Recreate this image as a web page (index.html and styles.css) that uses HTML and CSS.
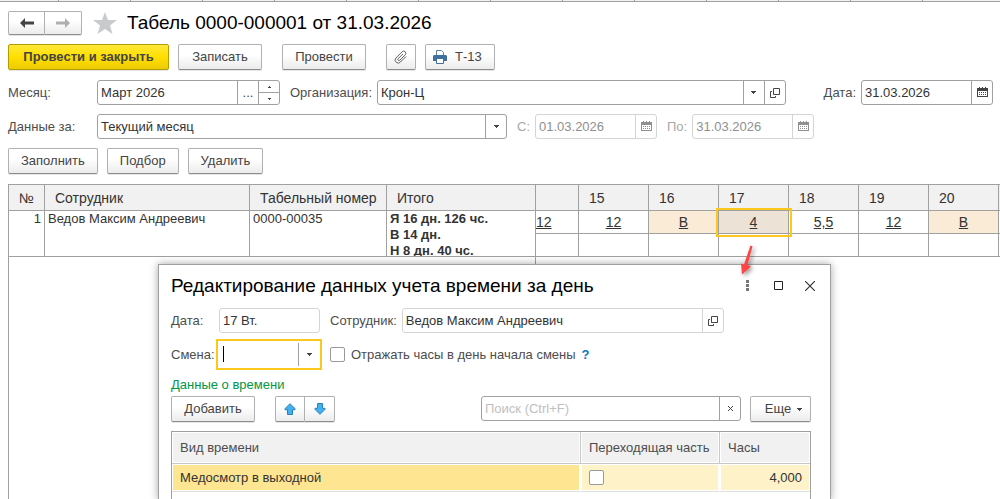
FILE: index.html
```
<!DOCTYPE html>
<html lang="ru">
<head>
    <meta charset="UTF-8">
    <meta name="viewport" content="width=device-width, initial-scale=1.0">
    <title>Табель 0000-000001 от 31.03.2026</title>
    <link rel="stylesheet" href="styles.css">
</head>
<body>
    <svg class="sprite" aria-hidden="true">
        <symbol id="icon-calendar" viewBox="0 0 11 11">
            <path d="M0 1h2V0h1v1h2V0h1v1h2V0h1v1h2v9H0z" fill="currentColor"/>
            <path d="M1 4h9v5H1z" fill="#fff"/>
            <path d="M2 5h1v1H2zM4 5h1v1H4zM6 5h1v1H6zM8 5h1v1H8zM2 7h1v1H2zM4 7h1v1H4zM6 7h1v1H6zM8 7h1v1H8z" fill="currentColor"/>
        </symbol>
        <symbol id="icon-open" viewBox="0 0 10 10">
            <path d="M3.500.5h6v6h-6zM2 3.500H.5v6h5V8" fill="none" stroke="currentColor"/>
        </symbol>
        <symbol id="icon-down" viewBox="0 0 5 3">
            <path d="M0 0h5v1H4v1H3v1H2V2H1V1H0z" fill="currentColor"/>
        </symbol>
    </svg>

    <div class="tab-strip"></div>

    <main class="document">
        <header class="title-bar">
            <div class="btn-group nav">
                <button class="btn" aria-label="Назад">
                    <svg width="14" height="10" viewBox="0 0 14 10"><path d="M5 0v3.500h9v3H5V10L0 5z" fill="#444"/></svg>
                </button>
                <button class="btn" aria-label="Вперед">
                    <svg width="14" height="10" viewBox="0 0 14 10"><path d="M9 0v3.500H0v3h9V10l5-5z" fill="#b0b0b0"/></svg>
                </button>
            </div>
            <svg class="star" width="24" height="22" viewBox="0 0 24 22"><path d="M12 0l3 8h9l-7 5.500 2.500 8.500-7.500-5-7.500 5L7 13.500 0 8h9z" fill="#c8cacc"/></svg>
            <h1>Табель 0000-000001 от 31.03.2026</h1>
        </header>

        <div class="toolbar">
            <button class="btn btn-primary">Провести и закрыть</button>
            <button class="btn btn-medium">Записать</button>
            <button class="btn btn-medium spaced">Провести</button>
            <button class="btn btn-clip spaced" aria-label="Файлы">
                <svg width="14" height="14" viewBox="0 0 14 14"><path d="M12 6.500L6.500 12a3 3 0 0 1-4.600-4L8 1.900a2.100 2.100 0 0 1 3.300 2.900L5.800 10.200a1.100 1.100 0 0 1-1.700-1.500L9 4" fill="none" stroke="#666"/></svg>
            </button>
            <button class="btn btn-print">
                <svg width="14" height="14" viewBox="0 0 14 14"><path d="M3.500 5V.5h5l2 2V5" fill="#fff" stroke="#5c7f9f"/><path d="M1 5h12l1 1v5H0V6z" fill="#3f6f9c"/><path d="M3.500 8.500h7v5h-7z" fill="#fff" stroke="#3f6f9c"/></svg>
                Т-13
            </button>
        </div>

        <div class="form-row">
            <label class="first-label" for="month">Месяц:</label>
            <div class="field month">
                <input id="month" type="text" value="Март 2026">
                <button aria-label="Выбрать">...</button>
                <div class="spinner">
                    <button aria-label="Больше"><svg width="3" height="2" viewBox="0 0 3 2"><path d="M1 0h1v1h1v1H0V1h1z" fill="#444"/></svg></button>
                    <button aria-label="Меньше"><svg width="3" height="2" viewBox="0 0 3 2"><path d="M0 0h3v1H2v1H1V1H0z" fill="#444"/></svg></button>
                </div>
            </div>
            <label class="next-label" for="org">Организация:</label>
            <div class="field org">
                <input id="org" type="text" value="Крон-Ц">
                <button aria-label="Список"><svg width="5" height="3"><use href="#icon-down"/></svg></button>
                <button aria-label="Открыть"><svg width="10" height="10"><use href="#icon-open"/></svg></button>
            </div>
            <label class="date-label" for="date">Дата:</label>
            <div class="field date">
                <input id="date" type="text" value="31.03.2026">
                <button aria-label="Календарь"><svg width="11" height="11"><use href="#icon-calendar"/></svg></button>
            </div>
        </div>

        <div class="form-row">
            <label class="first-label" for="period">Данные за:</label>
            <div class="field period">
                <input id="period" type="text" value="Текущий месяц">
                <button aria-label="Список"><svg width="5" height="3"><use href="#icon-down"/></svg></button>
            </div>
            <label class="next-label muted" for="from">С:</label>
            <div class="field short-date disabled">
                <input id="from" type="text" value="01.03.2026" disabled>
                <button aria-label="Календарь" disabled><svg width="11" height="11"><use href="#icon-calendar"/></svg></button>
            </div>
            <label class="next-label muted" for="to">По:</label>
            <div class="field short-date disabled">
                <input id="to" type="text" value="31.03.2026" disabled>
                <button aria-label="Календарь" disabled><svg width="11" height="11"><use href="#icon-calendar"/></svg></button>
            </div>
        </div>

        <div class="toolbar commands">
            <button class="btn">Заполнить</button>
            <button class="btn">Подбор</button>
            <button class="btn">Удалить</button>
        </div>

        <div class="sheet">
            <table class="timesheet">
                <colgroup>
                    <col class="c-num"><col class="c-name"><col class="c-code"><col class="c-total"><col class="c-cut">
                    <col class="c-day"><col class="c-day"><col class="c-day"><col class="c-day"><col class="c-day"><col class="c-day"><col>
                </colgroup>
                <thead>
                    <tr>
                        <th>№</th>
                        <th>Сотрудник</th>
                        <th>Табельный номер</th>
                        <th>Итого</th>
                        <th></th>
                        <th>15</th>
                        <th>16</th>
                        <th>17</th>
                        <th>18</th>
                        <th>19</th>
                        <th>20</th>
                        <th></th>
                    </tr>
                </thead>
                <tbody>
                    <tr>
                        <td class="num" rowspan="2">1</td>
                        <td rowspan="2">Ведов Максим Андреевич</td>
                        <td rowspan="2">0000-00035</td>
                        <td class="total" rowspan="2"><div>Я 16 дн. 126 чс.<br>В 14 дн.<br>Н 8 дн. 40 чс.</div></td>
                        <td class="day cut">12</td>
                        <td class="day">12</td>
                        <td class="day off">В</td>
                        <td class="day off selected">4</td>
                        <td class="day">5,5</td>
                        <td class="day">12</td>
                        <td class="day off">В</td>
                        <td class="day"></td>
                    </tr>
                    <tr class="second">
                        <td></td><td></td><td></td><td></td><td></td><td></td><td></td><td></td>
                    </tr>
                    <tr class="filler">
                        <td colspan="4"></td>
                        <td colspan="8"></td>
                    </tr>
                </tbody>
            </table>

            <section class="dialog" role="dialog" aria-labelledby="dialogTitle">
                <div class="dialog-head">
                    <h2 id="dialogTitle">Редактирование данных учета времени за день</h2>
                    <button aria-label="Еще"><svg width="3" height="11" viewBox="0 0 3 11"><path d="M0 0h3v3H0zM0 4h3v3H0zM0 8h3v3H0z" fill="#777"/></svg></button>
                    <button aria-label="Развернуть"><svg width="9" height="9" viewBox="0 0 9 9"><path d="M.5.5h8v8h-8z" fill="none" stroke="#222"/></svg></button>
                    <button aria-label="Закрыть"><svg width="10" height="10" viewBox="0 0 10 10"><path d="M0 0l10 10M10 0L0 10" stroke="#333" stroke-width="1.200"/></svg></button>
                </div>

                <div class="form-row">
                    <label class="dialog-label" for="day">Дата:</label>
                    <div class="field day-field light"><input id="day" type="text" value="17 Вт." readonly></div>
                    <label class="next-label" for="employee">Сотрудник:</label>
                    <div class="field employee light">
                        <input id="employee" type="text" value="Ведов Максим Андреевич" readonly>
                        <button aria-label="Открыть"><svg width="10" height="10"><use href="#icon-open"/></svg></button>
                    </div>
                </div>

                <div class="form-row shift-row">
                    <label class="shift-label" for="shift">Смена:</label>
                    <div class="field focused">
                        <span class="caret"></span>
                        <input id="shift" type="text">
                        <button aria-label="Список"><svg width="5" height="3"><use href="#icon-down"/></svg></button>
                    </div>
                    <input class="check" id="reflect" type="checkbox">
                    <label for="reflect">Отражать часы в день начала смены</label>
                    <a class="help" href="#">?</a>
                </div>

                <h3>Данные о времени</h3>

                <div class="toolbar time-tools">
                    <button class="btn btn-medium">Добавить</button>
                    <div class="btn-group spaced">
                        <button class="btn" aria-label="Вверх"><svg width="12" height="12" viewBox="0 0 12 12"><path d="M6 .7l5 5v1H8.500v4.800h-5V6.700H1v-1z" fill="#45b0f0" stroke="#2a7fb5"/></svg></button>
                        <button class="btn" aria-label="Вниз"><svg width="12" height="12" viewBox="0 0 12 12"><path d="M6 11.300l5-5v-1H8.500V.5h-5v4.800H1v1z" fill="#45b0f0" stroke="#2a7fb5"/></svg></button>
                    </div>
                    <div class="field search">
                        <input type="text" placeholder="Поиск (Ctrl+F)" aria-label="Поиск">
                        <button aria-label="Очистить"><svg width="5" height="5" viewBox="0 0 5 5"><path d="M0 0l5 5M5 0L0 5" stroke="#444"/></svg></button>
                    </div>
                    <button class="btn btn-more">Еще <svg width="5" height="3"><use href="#icon-down"/></svg></button>
                </div>

                <table class="time-table">
                    <colgroup><col><col class="c-pass"><col class="c-hours"></colgroup>
                    <thead>
                        <tr>
                            <th>Вид времени</th>
                            <th>Переходящая часть</th>
                            <th>Часы</th>
                        </tr>
                    </thead>
                    <tbody>
                        <tr>
                            <td class="current">Медосмотр в выходной</td>
                            <td><input class="check" type="checkbox" aria-label="Переходящая часть"></td>
                            <td class="hours">4,000</td>
                        </tr>
                        <tr class="empty"><td colspan="3"></td></tr>
                    </tbody>
                </table>

                <svg class="pointer" width="18" height="34" viewBox="0 0 18 34" aria-hidden="true"><path d="M11.500 1.500l2 .7L8.500 21l3.500 1.500L3 30.500 2 19.500l3 1z" fill="#f44"/></svg>
            </section>
        </div>
    </main>
</body>
</html>
```

FILE: styles.css
```
:root {
    --line: #a0a0a0;
    --line-light: #d4d4d4;
    --head: #f1f1f1;
    --text: #333;
    --label: #4d4d4d;
    --accent: #fbc91d;
}

* {
    margin: 0;
    padding: 0;
    box-sizing: border-box;
}

body {
    font-family: "Liberation Sans", Arial, sans-serif;
    font-size: 13px;
    line-height: 16px;
    color: var(--text);
    background: #fff;
    height: 100vh;
    overflow: hidden;
    display: flex;
    flex-direction: column;
}

button, input {
    font: inherit;
    color: inherit;
}

svg {
    display: block;
    flex-shrink: 0;
}

.sprite {
    position: absolute;
    width: 0;
    height: 0;
}

.tab-strip {
    height: 2px;
    flex-shrink: 0;
    border-bottom: 1px solid var(--line);
    background: repeating-linear-gradient(to right, #f2f2f2 0 71px, var(--line) 71px 72px) -13px 0;
}

.document {
    flex: 1;
    display: flex;
    flex-direction: column;
    padding: 8px 0 0 8px;
    min-height: 0;
}

/* Buttons */
.btn {
    display: flex;
    align-items: center;
    justify-content: center;
    height: 26px;
    padding: 0 12px;
    color: #444;
    white-space: nowrap;
    border: 1px solid #b0b0b0;
    border-bottom-color: #8c8c8c;
    border-radius: 2px;
    background: linear-gradient(#fff 40%, #ececec);
    box-shadow: 0 1px 0 rgba(0,0,0,0.1);
}

.btn-medium {
    width: 84px;
}

.btn-primary {
    width: 161px;
    font-weight: bold;
    border-color: #b59c00;
    background: linear-gradient(#ffe83a, #ffdf00 50%, #edcb00);
}

.btn-group {
    display: flex;
}

.btn-group .btn {
    width: 30px;
    padding: 0;
}

.btn-group .btn:first-child {
    border-radius: 2px 0 0 2px;
}

.btn-group .btn:last-child {
    border-left: 0;
    border-radius: 0 2px 2px 0;
}

.nav .btn {
    width: 37px;
    height: 24px;
}

.title-bar {
    display: flex;
    align-items: center;
    height: 25px;
}

.star {
    margin: 0 10px 0 11px;
}

h1 {
    font-size: 19px;
    line-height: 24px;
    font-weight: normal;
    color: #000;
}

.toolbar {
    display: flex;
    gap: 9px;
    margin-top: 9px;
}

.toolbar .spaced {
    margin-left: 11px;
}

.btn-clip {
    width: 30px;
    padding: 0;
}

.btn-print {
    padding: 0 12px 0 7px;
    gap: 8px;
}

/* Fields */
.form-row {
    display: flex;
    align-items: center;
    margin-top: 9px;
    padding-right: 7px;
    color: var(--label);
}

.toolbar + .form-row {
    margin-top: 10px;
}

.first-label {
    width: 89px;
}

.next-label {
    margin: 0 5px 0 10px;
}

.date-label {
    margin: 0 5px 0 38px;
}

.muted {
    color: #a8a8a8;
}

.field {
    display: flex;
    height: 25px;
    color: var(--text);
    border: 1px solid var(--line);
    border-radius: 3px;
    background: #fff;
}

.field input {
    flex: 1;
    min-width: 0;
    padding: 0 3px;
    border: 0;
    outline: 0;
    background: none;
}

.field button {
    display: flex;
    align-items: center;
    justify-content: center;
    width: 21px;
    color: #444;
    border: 0;
    border-left: 1px solid var(--line);
    background: none;
}

.field .spinner {
    width: 21px;
    display: flex;
    flex-direction: column;
    border-left: 1px solid var(--line);
}

.spinner button {
    flex: 1;
    width: 100%;
    border-left: 0;
}

.spinner button + button {
    border-top: 1px solid var(--line);
}

.month {
    width: 183px;
}

.org {
    flex: 1;
}

.date {
    width: 132px;
}

.period {
    width: 410px;
}

.short-date {
    width: 122px;
}

.light,
.disabled,
.light button,
.disabled button {
    border-color: var(--line-light);
}

.disabled,
.disabled button {
    color: #909090;
}

/* Timesheet */
.sheet {
    position: relative;
    flex: 1;
    margin-top: 10px;
    min-height: 0;
}

table {
    width: 100%;
    table-layout: fixed;
    border-collapse: collapse;
}

th {
    font-weight: normal;
    text-align: left;
    background: var(--head);
}

.timesheet {
    height: 100%;
}

.timesheet th,
.timesheet td {
    border: 1px solid var(--line);
    border-right-width: 0;
}

.timesheet th {
    height: 26px;
    padding: 0 10px;
    font-size: 14px;
    white-space: nowrap;
}

.timesheet td {
    height: 23px;
    padding: 0 3px;
    vertical-align: top;
}

.timesheet td.num {
    text-align: right;
}

.total {
    font-weight: bold;
}

.total div {
    height: 45px;
    overflow: hidden;
}

.timesheet .day {
    padding: 3px 0 0;
    font-size: 14px;
    text-align: center;
    text-decoration: underline;
}

.timesheet .cut {
    text-align: left;
}

.off {
    background: #faebd7;
}

.selected {
    background: #ede2d6;
    outline: 2px solid var(--accent);
    outline-offset: 1px;
}

.timesheet .filler td {
    height: auto;
    border-bottom: 0;
}

.c-num { width: 36px; }
.c-name { width: 205px; }
.c-code { width: 137px; }
.c-total { width: 149px; }
.c-cut { width: 43px; }
.c-day { width: 70px; }

/* Dialog */
.dialog {
    position: absolute;
    top: 80px;
    left: 150px;
    right: 169px;
    bottom: -1px;
    padding: 0 19px 0 12px;
    border: 1px solid var(--line);
    background: #fff;
    box-shadow: 0 0 8px rgba(0,0,0,0.35);
}

.dialog-head {
    display: flex;
    align-items: center;
    height: 41px;
    margin-right: -14px;
}

.dialog-head h2 {
    flex: 1;
    font-size: 19px;
    line-height: 22px;
    font-weight: normal;
    white-space: nowrap;
    color: #000;
}

.dialog-head button {
    display: flex;
    align-items: center;
    justify-content: center;
    width: 31px;
    height: 24px;
    border: 0;
    background: none;
}

.dialog .form-row {
    margin-top: 2px;
    padding-right: 0;
}

.dialog-label {
    width: 48px;
}

.day-field {
    width: 101px;
}

.employee {
    width: 322px;
}

.dialog .shift-row {
    margin-top: 6px;
}

.shift-label {
    width: 45px;
}

.focused {
    position: relative;
    width: 106px;
    height: 31px;
    padding: 2px 1px;
    border: 2px solid var(--accent);
    border-radius: 0;
}

.caret {
    position: absolute;
    top: 5px;
    left: 5px;
    width: 1px;
    height: 16px;
    background: #000;
}

.check {
    appearance: none;
    width: 15px;
    height: 15px;
    border: 1px solid #999;
    border-radius: 2px;
    background: #fff;
}

.shift-row .check {
    margin: 0 6px 0 8px;
}

.help {
    margin-left: 6px;
    font-weight: bold;
    color: #0a78c0;
    text-decoration: none;
}

h3 {
    margin-top: 7px;
    font-size: 13px;
    line-height: 16px;
    font-weight: normal;
    color: #009646;
}

.time-tools {
    margin-top: 3px;
}

.search {
    width: 260px;
    margin-left: auto;
}

.search input::placeholder {
    color: #c0c0c0;
}

.btn-more {
    width: 61px;
    gap: 6px;
    padding: 0 6px 0 12px;
}

.time-table {
    margin-top: 9px;
    border: 1px solid var(--line);
    border-collapse: separate;
    border-spacing: 0;
}

.time-table th {
    height: 32px;
    padding: 0 8px;
    color: var(--label);
    border-right: 1px solid #c8c8c8;
    border-bottom: 1px solid #c8c8c8;
    box-shadow: inset 0 0 0 1px #fff;
}

.time-table th:last-child {
    border-right: 0;
}

.time-table td {
    height: 28px;
    padding: 0 8px;
    background: #fdf2c8;
    border-right: 1px solid #fff;
    border-bottom: 1px solid #e0e0e0;
    box-shadow: inset 0 0 0 1px #fff;
}

.time-table .current {
    background: #fee591;
}

.time-table .check {
    display: block;
}

.time-table .hours {
    text-align: right;
    border-right: 0;
}

.time-table .empty td {
    background: #fff;
}

.c-pass { width: 139px; }
.c-hours { width: 90px; }

.pointer {
    position: absolute;
    top: -21px;
    right: 73px;
    filter: drop-shadow(2px 2px 2px rgba(0,0,0,0.4));
}
```
